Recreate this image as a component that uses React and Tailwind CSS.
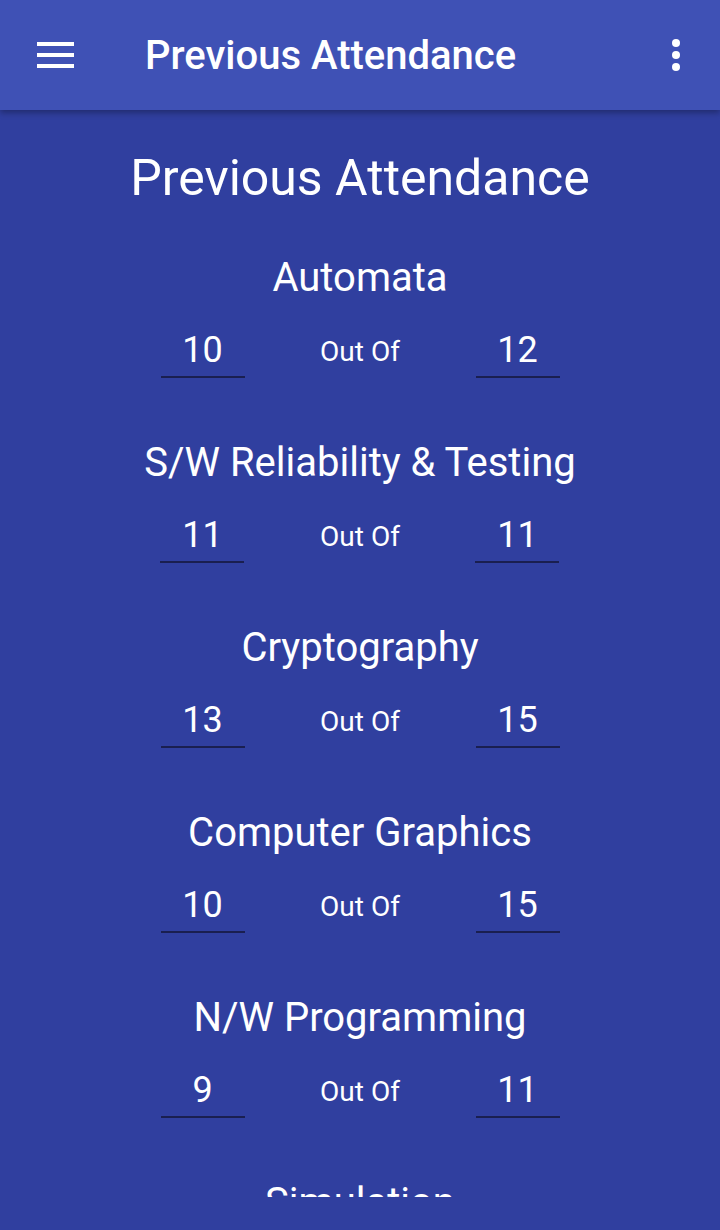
import React from 'react';

const subjects = [
  { name: 'Automata', attended: 10, total: 12 },
  { name: 'S/W Reliability & Testing', attended: 11, total: 11 },
  { name: 'Cryptography', attended: 13, total: 15 },
  { name: 'Computer Graphics', attended: 10, total: 15 },
  { name: 'N/W Programming', attended: 9, total: 11 },
  { name: 'Simulation', attended: 12, total: 14 },
];

const font = { fontFamily: 'Roboto, "Noto Sans", sans-serif' };

const App = () => {
  return (
    <div className="w-[720px] h-[1230px] bg-[#303F9F] text-white overflow-hidden flex flex-col" style={font}>
      {/* Toolbar */}
      <div className="relative z-10 h-[110px] shrink-0 bg-[#3F51B5] flex items-center shadow-[0_3px_6px_rgba(0,0,0,0.3)]">
        <div className="w-[37px] ml-[37px] flex flex-col gap-[7px]">
          <div className="h-[4px] bg-white" />
          <div className="h-[4px] bg-white" />
          <div className="h-[4px] bg-white" />
        </div>
        <h1 className="ml-[71px] mt-[2px] text-[40px] font-medium leading-none">Previous Attendance</h1>
        <div className="ml-auto mr-[40px] flex flex-col gap-[4px] items-center">
          <span className="w-[8px] h-[8px] rounded-full bg-white" />
          <span className="w-[8px] h-[8px] rounded-full bg-white" />
          <span className="w-[8px] h-[8px] rounded-full bg-white" />
        </div>
      </div>

      {/* Content */}
      <div className="h-[1087px] overflow-hidden flex flex-col items-center">
        <h2 className="mt-[38px] text-[50px] leading-[60px]">Previous Attendance</h2>
        {subjects.map((s, idx) => (
          <div key={idx} className={`flex flex-col items-center ${idx === 0 ? 'mt-[46px]' : 'mt-[61px]'}`}>
            <div className="text-[40px] leading-[48px]">{s.name}</div>
            <div className="mt-[26px] flex items-end">
              <div className="w-[84px] border-b-2 border-[#1a1f50] text-center text-[36px] leading-[44px] pb-[4px]">{s.attended}</div>
              <div className="w-[231px] text-center text-[28px] leading-[44px] pb-[4px]">Out Of</div>
              <div className="w-[84px] border-b-2 border-[#1a1f50] text-center text-[36px] leading-[44px] pb-[4px]">{s.total}</div>
            </div>
          </div>
        ))}
      </div>
    </div>
  );
};

export default App;
